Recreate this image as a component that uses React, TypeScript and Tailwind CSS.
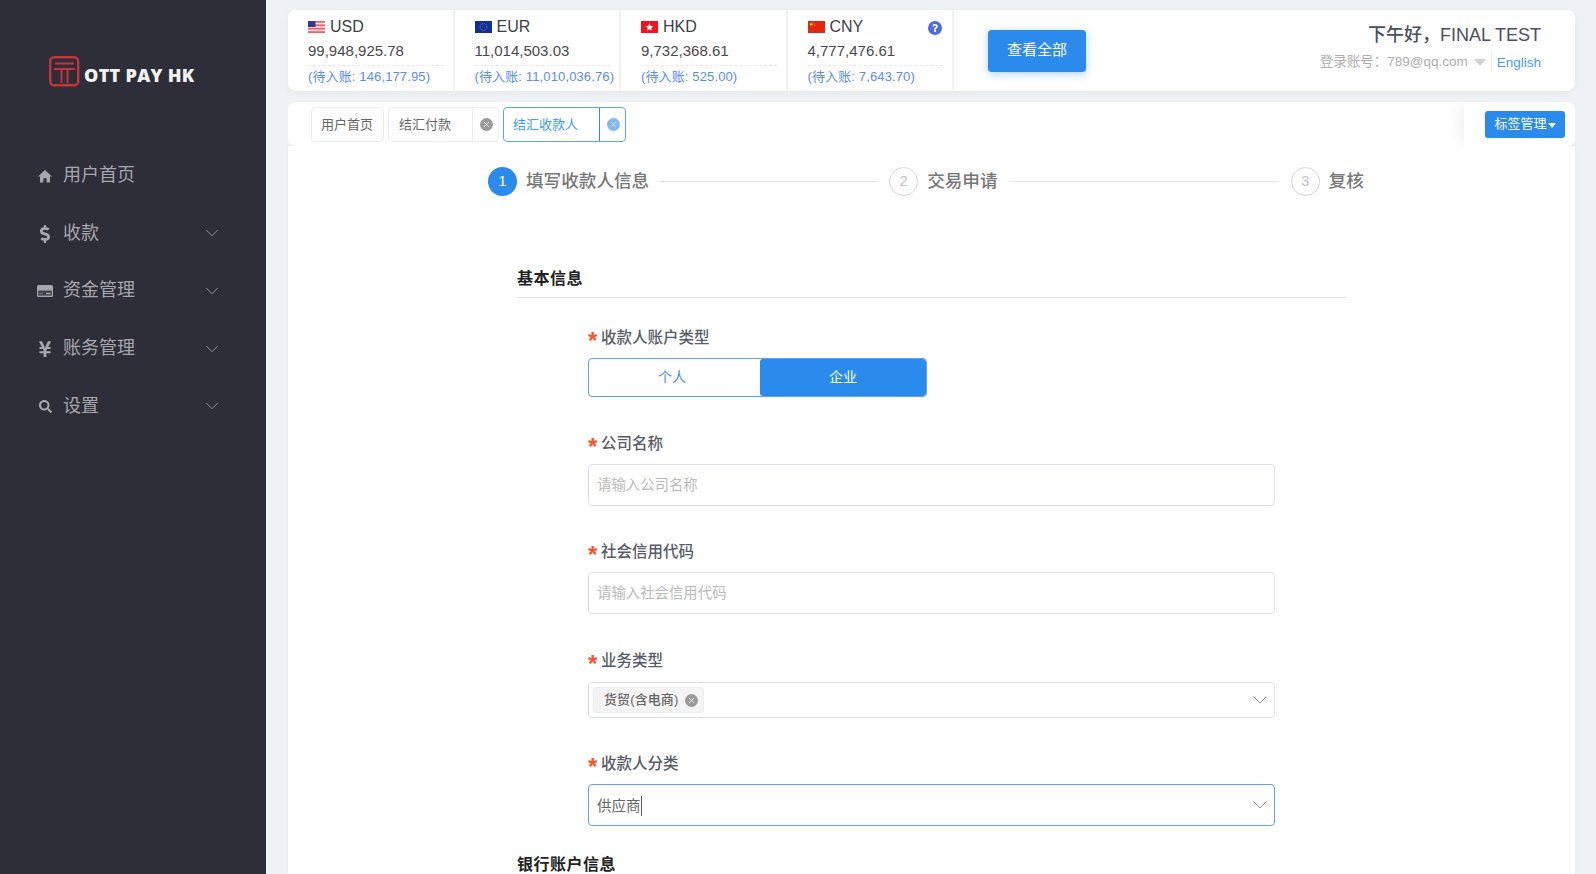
import { ChevronDown, X } from "lucide-react"
import { FaDollarSign, FaYenSign, FaSearch, FaQuestion } from "react-icons/fa"
import type { ReactNode } from "react"

function UsFlag() {
  return (
    <svg width="17" height="12" viewBox="0 0 17 12" className="shrink-0">
      <rect width="17" height="12" fill="#fdd" />
      <rect y="0" width="17" height="1.7" fill="#f0626a" />
      <rect y="3.4" width="17" height="1.7" fill="#f0626a" />
      <rect y="6.8" width="17" height="1.7" fill="#f0626a" />
      <rect y="10.2" width="17" height="1.8" fill="#f0626a" />
      <rect width="7.5" height="6" fill="#2e3a9c" />
    </svg>
  )
}

function EuFlag() {
  return (
    <svg width="17" height="12" viewBox="0 0 17 12" className="shrink-0">
      <rect width="17" height="12" fill="#10319a" />
      <circle cx="8.5" cy="6" r="3.4" fill="none" stroke="#c9b93a" strokeWidth="0.7" strokeDasharray="0.8 1" />
    </svg>
  )
}

function HkFlag() {
  return (
    <svg width="17" height="12" viewBox="0 0 17 12" className="shrink-0">
      <rect width="17" height="12" fill="#f5101e" />
      <polygon points="8.5,2 9.6,4.9 12.6,5 10.2,6.9 11,9.8 8.5,8.2 6,9.8 6.8,6.9 4.4,5 7.4,4.9" fill="#fff" />
    </svg>
  )
}

function CnFlag() {
  return (
    <svg width="17" height="12" viewBox="0 0 17 12" className="shrink-0">
      <rect width="17" height="12" fill="#e3260f" />
      <circle cx="3.2" cy="3.2" r="1.3" fill="#f5d82b" />
      <circle cx="6" cy="1.6" r="0.4" fill="#f5d82b" />
      <circle cx="6.8" cy="3" r="0.4" fill="#f5d82b" />
      <circle cx="6.6" cy="4.6" r="0.4" fill="#f5d82b" />
    </svg>
  )
}

function HomeIcon() {
  return (
    <svg width="14" height="14" viewBox="0 0 14 14" fill="currentColor">
      <path d="M7 1 L14 7.6 H12 V13.5 H8.6 V9.2 H5.4 V13.5 H2 V7.6 H0 Z" />
    </svg>
  )
}

function CardIcon() {
  return (
    <svg width="16" height="12" viewBox="0 0 16 12">
      <rect width="16" height="12" rx="1.5" fill="#a6a7ac" />
      <rect x="1.2" y="5.6" width="13.6" height="5" fill="#3f4049" />
      <rect x="9" y="7.8" width="4.5" height="1.4" fill="#a6a7ac" />
      <rect x="2.2" y="7.8" width="4" height="1.4" fill="#6d6e75" />
    </svg>
  )
}

function Logo() {
  return (
    <div className="flex h-[30px] items-center pl-[49px]">
      <svg width="31" height="31" viewBox="0 0 31 31" className="shrink-0">
        <rect x="1.2" y="1.2" width="28" height="28" rx="4" fill="none" stroke="#c5343a" strokeWidth="2.4" />
        <path d="M6 7.5h19M5 13h21M12.5 13V27M18.5 13V27" fill="none" stroke="#c5343a" strokeWidth="2" />
      </svg>
      <span className="ml-[4px] mt-[8px] whitespace-nowrap font-['Open_Sans',sans-serif] text-[18px] font-extrabold tracking-[0.3px] text-[#f2f2f2]">
        OTT PAY HK
      </span>
    </div>
  )
}

const menu = [
  { label: "用户首页", icon: <HomeIcon />, arrow: false },
  { label: "收款", icon: <FaDollarSign size={18} />, arrow: true },
  { label: "资金管理", icon: <CardIcon />, arrow: true },
  { label: "账务管理", icon: <FaYenSign size={18} />, arrow: true },
  { label: "设置", icon: <FaSearch size={13} />, arrow: true },
]

const balances = [
  { code: "USD", flag: <UsFlag />, amount: "99,948,925.78", pending: "(待入账: 146,177.95)" },
  { code: "EUR", flag: <EuFlag />, amount: "11,014,503.03", pending: "(待入账: 11,010,036.76)" },
  { code: "HKD", flag: <HkFlag />, amount: "9,732,368.61", pending: "(待入账: 525.00)" },
  { code: "CNY", flag: <CnFlag />, amount: "4,777,476.61", pending: "(待入账: 7,643.70)" },
]

function ClearDot({ color }: { color: string }) {
  return (
    <span className={`flex h-[13px] w-[13px] items-center justify-center rounded-full ${color}`}>
      <X size={9} strokeWidth={2} className="text-white" />
    </span>
  )
}

function Label({ children }: { children: ReactNode }) {
  return (
    <div className="flex h-[20px] items-center text-[15.5px] font-medium text-[#565c69]">
      <span className="w-[13px] shrink-0 pt-[7px] text-[24px] font-bold leading-none text-[#f5542c]">*</span>
      <span className="pt-[1px]">{children}</span>
    </div>
  )
}

function Step({ n, text, active }: { n: number; text: string; active?: boolean }) {
  return (
    <div className="flex shrink-0 items-center">
      <span
        className={
          active
            ? "flex h-[29px] w-[29px] items-center justify-center rounded-full bg-[#2a8bec] text-[15px] text-white"
            : "flex h-[29px] w-[29px] items-center justify-center rounded-full border border-[#d4d4d4] text-[15px] text-[#c4c4c4]"
        }
      >
        {n}
      </span>
      <span className="ml-[9px] text-[17.6px] font-medium text-[#777]">{text}</span>
    </div>
  )
}

export default function App() {
  return (
    <div className="flex h-screen overflow-hidden bg-[#eff2f5] font-['Liberation_Sans','Noto_Sans_CJK_SC',sans-serif]">
      {/* Sidebar */}
      <aside className="w-[266px] shrink-0 bg-[#2d2e38] pt-[56px]">
        <Logo />
        <nav className="mt-[61px]">
          {menu.map((m) => (
            <div key={m.label} className="flex h-[57.6px] items-center pl-[37px] pr-[43px] text-[#a6a7ac]">
              <span className="flex w-[16px] justify-center pt-[1px]">{m.icon}</span>
              <span className="ml-[10px] flex-1 text-[18px]">{m.label}</span>
              {m.arrow && <ChevronDown size={22} strokeWidth={0.9} />}
            </div>
          ))}
        </nav>
      </aside>

      <main className="flex min-w-0 flex-1 flex-col pl-[22px] pr-[21px] pt-[10px]">
        {/* Balances */}
        <section className="flex h-[81px] shrink-0 items-center rounded-lg bg-white shadow-[0_2px_6px_rgba(0,0,0,0.04)]">
          {balances.map((b) => (
            <div key={b.code} className="relative h-full w-[166.5px] shrink-0 border-r-2 border-[#f0f2f5] pl-5 pr-[9px]">
              <div className="flex h-[32px] items-center pt-[1px] text-[16px] text-[#3b3f4a]">
                {b.flag}
                <span className="ml-[5px]">{b.code}</span>
              </div>
              <div className="flex h-[24px] items-center border-b border-dashed border-[#e8e8e8] pb-[5px] text-[15px] text-[#4a4a4a]">
                {b.amount}
              </div>
              <div className="whitespace-nowrap pt-[1px] text-[13px] leading-[20px] tracking-[0.13px] text-[#5b8cee]">
                {b.pending}
              </div>
              {b.code === "CNY" && (
                <span className="absolute right-[10px] top-[11px] flex h-[14px] w-[14px] items-center justify-center rounded-full bg-[#4a6fdc]">
                  <FaQuestion size={8} className="text-white" />
                </span>
              )}
            </div>
          ))}
          <button className="ml-[34px] h-[42px] w-[98px] rounded bg-[#2a8bec] text-[15px] text-white shadow-[0_2px_8px_rgba(42,139,236,0.4)]">
            查看全部
          </button>
          <div className="ml-auto pb-[7px] pr-[34px] text-right">
            <div className="text-[18px] font-medium leading-[26px] text-[#4a5060]">下午好，FINAL TEST</div>
            <div className="mt-[4px] flex items-center justify-end text-[13.5px] leading-[20px] text-[#aeaeae]">
              登录账号：789@qq.com
              <span className="ml-[6px] h-0 w-0 border-x-[6px] border-t-[7px] border-x-transparent border-t-[#d0d0d0]" />
              <span className="mx-[5px] h-[20px] border-l border-[#e8e8e8]" />
              <span className="pt-[1px] text-[13.5px] text-[#4a9cf5]">English</span>
            </div>
          </div>
        </section>

        {/* Tabs */}
        <section className="relative mt-[11px] flex h-[44px] shrink-0 items-center overflow-hidden rounded-lg bg-white pl-[23px]">
          <div className="flex h-[35px] w-[73px] items-center justify-center rounded border border-[#ececec] pr-[1px] pt-[1px] text-[13px] text-[#666]">
            用户首页
          </div>
          <div className="ml-[4px] flex h-[35px] w-[111px] items-center rounded border border-[#ececec] text-[13px] text-[#666]">
            <span className="flex-1 pl-[10px] pt-[1px]">结汇付款</span>
            <span className="flex h-full w-[26px] items-center justify-center border-l border-[#ececec] pl-[1px]">
              <ClearDot color="bg-[#9a9a9a]" />
            </span>
          </div>
          <div className="ml-[4px] flex h-[35px] w-[123px] items-center rounded border border-[#5aa5f5] text-[13px] text-[#3d9bf5]">
            <span className="flex-1 pl-[9px] pt-[1px]">结汇收款人</span>
            <span className="flex h-full w-[26px] items-center justify-center border-l border-[#2a8bec] pl-[1px]">
              <ClearDot color="bg-[#7fb8f5]" />
            </span>
          </div>
          <div className="absolute bottom-0 right-0 top-0 flex w-[111px] items-center justify-end rounded-r-lg bg-white pr-[10px] shadow-[-10px_0_14px_-6px_rgba(0,0,0,0.07)]">
            <button className="flex h-[27px] w-[80px] items-center justify-center rounded-[3px] bg-[#2a8bec] text-[13px] text-white">
              标签管理
              <span className="ml-[1px] mt-[2px] h-0 w-0 border-x-[4px] border-t-[5px] border-x-transparent border-t-white" />
            </button>
          </div>
        </section>

        {/* Form */}
        <section className="flex-1 bg-white pt-[21px] shadow-[0_-1px_3px_rgba(0,0,0,0.04)]">
          <div className="flex items-center pl-[200px]">
            <Step n={1} text="填写收款人信息" active />
            <span className="mx-[12px] w-[216px] border-t border-[#e4e4e4]" />
            <Step n={2} text="交易申请" />
            <span className="mx-[12px] w-[269px] border-t border-[#e4e4e4]" />
            <Step n={3} text="复核" />
          </div>

          <div className="ml-[229px] w-[829px]">
            <div className="mt-[64px] h-[38px] border-b border-[#e4e4e4] text-[16px] font-bold leading-[37px] tracking-[0.5px] text-[#222]">
              基本信息
            </div>

            <div className="w-[758px] pl-[71px]">
              <div className="mt-[29px]">
                <Label>收款人账户类型</Label>
                <div className="mt-[11px] flex h-[39px] w-[339px] overflow-hidden rounded border border-[#5aa5f5] text-[14px]">
                  <div className="flex flex-1 items-center justify-center pr-[5px] text-[#4a8cf0]">个人</div>
                  <div className="flex w-[166px] items-center justify-center rounded-[3px] bg-[#2a8bec] text-white">企业</div>
                </div>
              </div>

              <div className="mt-[36px]">
                <Label>公司名称</Label>
                <div className="mt-[11px] flex h-[42px] items-center rounded border border-[#dcdfe6] px-[8px] pt-[1px] text-[14.4px] text-[#bbb]">
                  请输入公司名称
                </div>
              </div>

              <div className="mt-[35px]">
                <Label>社会信用代码</Label>
                <div className="mt-[11px] flex h-[42px] items-center rounded border border-[#dcdfe6] px-[8px] pt-[2px] text-[14.4px] text-[#bbb]">
                  请输入社会信用代码
                </div>
              </div>

              <div className="mt-[36px]">
                <Label>业务类型</Label>
                <div className="mt-[12px] flex h-[36px] items-center rounded border border-[#dcdfe6] pl-[4px] pr-[2px]">
                  <span className="flex h-[26px] w-[111px] items-center rounded-[3px] border border-[#ededed] bg-[#f4f4f5] pl-[10px] text-[13px] font-medium tracking-[0.1px] text-[#666]">
                    货贸(含电商)
                    <span className="ml-[7px]">
                      <ClearDot color="bg-[#9a9a9a]" />
                    </span>
                  </span>
                  <ChevronDown size={24} strokeWidth={0.9} className="ml-auto text-[#888]" />
                </div>
              </div>

              <div className="mt-[35px]">
                <Label>收款人分类</Label>
                <div className="mt-[11px] flex h-[42px] items-center rounded border border-[#5aa5f5] pl-[8px] pr-[2px] text-[14.5px] text-[#666]">
                  <span className="pt-[3px]">供应商</span>
                  <span className="mt-[2px] h-[20px] border-l border-[#555]" />
                  <ChevronDown size={24} strokeWidth={0.9} className="ml-auto text-[#888]" />
                </div>
              </div>
            </div>

            <div className="mt-[29px] h-[20px] text-[16px] font-bold leading-[20px] tracking-[0.5px] text-[#222]">
              银行账户信息
            </div>
          </div>
        </section>
      </main>
    </div>
  )
}
